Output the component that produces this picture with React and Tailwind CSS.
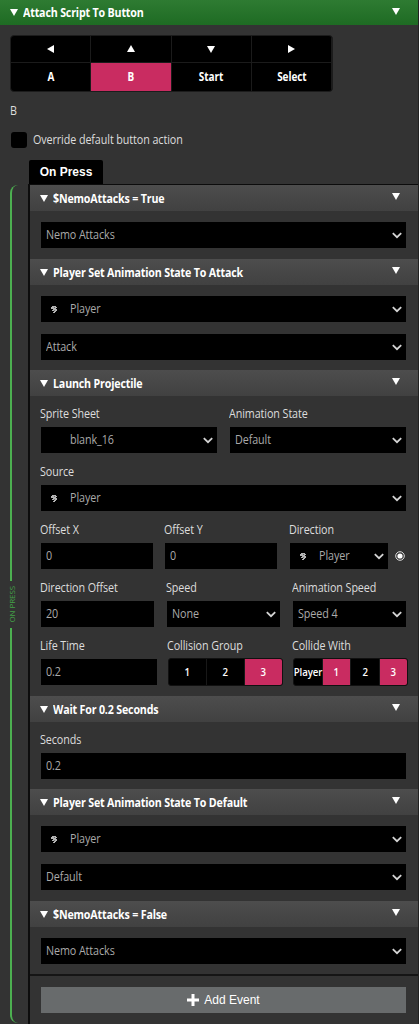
import clsx from 'clsx';

function Triangle({ className }) {
  return (
    <svg viewBox="0 0 8 7" className={clsx('w-2 h-[7px] shrink-0 fill-white', className)}>
      <path d="M0 0h8L4 7z" />
    </svg>
  );
}

function Chevron() {
  return (
    <svg viewBox="0 0 10 7" className="w-[10px] h-[7px] ml-auto mr-1 shrink-0" fill="none" stroke="#d4d4d4" strokeWidth="1.8">
      <path d="M0.8 1.2L5 5.2L9.2 1.2" />
    </svg>
  );
}

function Sprite() {
  return (
    <svg viewBox="0 0 8 8" className="w-2 h-2 ml-1 mr-3 shrink-0">
      <path d="M2 1h4v1h1v1H6v1h1v2H6v1H5v1H3V7h1V6H2V5h1V4H1V2h1z" fill="#b5b5b5" />
      <path d="M4 2h1v1H4zM4 5h1v1H4z" fill="#6a6a6a" />
    </svg>
  );
}

// slightly narrowed UI text
function Text({ className, children }) {
  return (
    <span className={clsx('inline-block origin-left scale-x-[0.86] whitespace-nowrap', className)}>
      {children}
    </span>
  );
}

function Title({ children }) {
  return (
    <span className="inline-block origin-left scale-x-[0.89] whitespace-nowrap pt-px ml-[5px] text-[12px] font-bold tracking-[-0.2px]">
      {children}
    </span>
  );
}

function Header({ title }) {
  return (
    <div className="flex items-center h-[26px] pl-[10px] pr-[18px] bg-linear-to-b from-[#4d4d4d] to-[#414141] text-white">
      <Triangle />
      <Title>{title}</Title>
      <Triangle className="ml-auto mb-[3px]" />
    </div>
  );
}

function Event({ title, className, children }) {
  return (
    <section className={className}>
      <Header title={title} />
      <div className="pt-[11px] pl-[11px] pr-3">{children}</div>
    </section>
  );
}

function Box({ children, className }) {
  return (
    <div className={clsx('flex items-center h-[26px] pl-[5px] bg-black text-[#aaa]', className)}>
      {children}
    </div>
  );
}

function Input({ value }) {
  return <Box><Text>{value}</Text></Box>;
}

function Select({ value, sprite, blank, className }) {
  return (
    <Box className={className}>
      {sprite && <Sprite />}
      <Text className={blank && 'ml-6'}>{value}</Text>
      <Chevron />
    </Box>
  );
}

function Label({ children }) {
  return (
    <div className="h-[20px] mb-[4px] -ml-[1px] pt-[2px] leading-[18px] text-[#ddd]">
      <Text>{children}</Text>
    </div>
  );
}

function Field({ label, className, children }) {
  return (
    <div className={clsx('min-w-0', className)}>
      <Label>{label}</Label>
      {children}
    </div>
  );
}

function Toggles({ options, active }) {
  return (
    <div className="flex h-7 -mt-[1px] rounded-[3px] overflow-hidden border border-[#111] bg-black text-[11.5px] font-semibold text-white">
      {options.map((o) => (
        <div
          key={o}
          className={clsx(
            'flex flex-1 basis-0 min-w-0 items-center justify-center border-l border-[#181818] first:border-l-0',
            active.includes(o) && 'bg-[#c92c61]'
          )}
        >
          <span className="inline-block scale-x-[0.84]">{o}</span>
        </div>
      ))}
    </div>
  );
}

const arrows = ['M7 0v8L0 4z', 'M0 7h8L4 0z', 'M0 1h8L4 8z', 'M1 0v8l7-4z'];
const buttons = ['A', 'B', 'Start', 'Select'];

function ButtonPicker() {
  return (
    <div className="grid grid-cols-4 grid-rows-[27px_28px] w-[323px] h-[57px] mt-[10px] ml-[10px] rounded-[4px] overflow-hidden border border-[#1c1c1c] bg-black text-white text-[11.5px] font-bold tracking-[-0.1px]">
      {arrows.map((d) => (
        <div key={d} className="flex items-center justify-center border-b border-r border-[#1b1b1b]">
          <svg viewBox="0 0 8 8" className="w-2 h-2 fill-white"><path d={d} /></svg>
        </div>
      ))}
      {buttons.map((b) => (
        <div key={b} className={clsx('flex items-center justify-center border-r border-[#1b1b1b]', b === 'B' && 'bg-[#c92c61]')}>
          <span className="inline-block scale-x-[0.87]">{b}</span>
        </div>
      ))}
    </div>
  );
}

function Rail() {
  return (
    <div className="flex flex-col w-7 shrink-0 pl-[10px] pt-[1px] pb-[1px] text-[#43a047]">
      <div className="h-[396px] w-2 border-l-2 border-[#4caf50] rounded-tl-[8px]" />
      <div className="flex items-center justify-center h-[47px] w-[3px]">
        <span className="[writing-mode:vertical-rl] rotate-180 text-[8px] tracking-[-0.1px] whitespace-nowrap">ON PRESS</span>
      </div>
      <div className="flex-1 w-2 border-l-2 border-[#4caf50] rounded-bl-[8px]" />
    </div>
  );
}

export default function App() {
  return (
    <div className="flex flex-col w-[419px] h-[1024px] overflow-hidden bg-[#333] border-r border-[#222] font-['Open_Sans',sans-serif] text-[12.5px] tracking-[-0.1px] text-[#ddd]">
      <div className="flex items-center h-[25px] shrink-0 pl-[10px] pr-[18px] bg-linear-to-b from-[#2e7b32] to-[#1e6b23] text-white">
        <Triangle />
        <Title>Attach Script To Button</Title>
        <Triangle className="ml-auto mb-[3px]" />
      </div>
      <ButtonPicker />
      <div className="h-[18px] mt-[10px] pl-[10px] leading-[18px]"><Text>B</Text></div>
      <div className="flex items-center h-4 mt-3 pl-[11px]">
        <div className="w-4 h-4 rounded-[3px] bg-black" />
        <Text className="ml-[6px]">Override default button action</Text>
      </div>
      <div className="flex items-center justify-center w-[74px] h-[24px] mt-3 ml-[29px] shrink-0 rounded-t-[2px] bg-black text-white font-['Liberation_Sans',sans-serif] text-[12px] font-bold tracking-normal">
        On Press
      </div>
      <div className="flex flex-1 min-h-0">
        <Rail />
        <div className="flex-1 min-w-0 border-l-2 border-t border-[#0c0c0c]">
          <Event title="$NemoAttacks = True" className="h-[74px]">
            <Select value="Nemo Attacks" />
          </Event>
          <Event title="Player Set Animation State To Attack" className="h-[111px]">
            <Select value="Player" sprite />
            <Select value="Attack" className="mt-3" />
          </Event>
          <Event title="Launch Projectile" className="h-[326px]">
            <div className="flex flex-col gap-2 -mt-[4px]">
              <div className="flex gap-[13px]">
                <Field label="Sprite Sheet" className="flex-1"><Select value="blank_16" blank /></Field>
                <Field label="Animation State" className="flex-1"><Select value="Default" /></Field>
              </div>
              <Field label="Source"><Select value="Player" sprite /></Field>
              <div className="flex">
                <Field label="Offset X" className="w-[112px]"><Input value="0" /></Field>
                <Field label="Offset Y" className="w-[112px] ml-3"><Input value="0" /></Field>
                <Field label="Direction" className="w-[98px] ml-[13px]"><Select value="Player" sprite /></Field>
                <div className="flex items-center justify-center h-[26px] mt-6 ml-[7px]">
                  <svg viewBox="0 0 10 10" className="w-[10px] h-[10px]">
                    <circle cx="5" cy="5" r="4.3" fill="none" stroke="#ddd" />
                    <circle cx="5" cy="5" r="2.6" fill="#fff" />
                  </svg>
                </div>
              </div>
              <div className="flex gap-[13px]">
                <Field label="Direction Offset" className="flex-1"><Input value="20" /></Field>
                <Field label="Speed" className="flex-1"><Select value="None" /></Field>
                <Field label="Animation Speed" className="flex-1"><Select value="Speed 4" /></Field>
              </div>
              <div className="flex -mr-[2px]">
                <Field label="Life Time" className="w-[116px]"><Input value="0.2" /></Field>
                <Field label="Collision Group" className="w-[115px] ml-[11px]"><Toggles options={['1', '2', '3']} active={['3']} /></Field>
                <Field label="Collide With" className="w-[115px] ml-[10px]"><Toggles options={['Player', '1', '2', '3']} active={['1', '3']} /></Field>
              </div>
            </div>
          </Event>
          <Event title="Wait For 0.2 Seconds" className="h-[93px]">
            <div className="-mt-[4px]">
              <Field label="Seconds"><Input value="0.2" /></Field>
            </div>
          </Event>
          <Event title="Player Set Animation State To Default" className="h-[112px]">
            <Select value="Player" sprite />
            <Select value="Default" className="mt-3" />
          </Event>
          <Event title="$NemoAttacks = False" className="h-[73px]">
            <Select value="Nemo Attacks" />
          </Event>
          <div className="pt-[11px] pl-[11px] pr-3 border-t-2 border-[#151515]">
            <div className="flex items-center justify-center h-[26px] bg-[#686b6c] text-white font-['Liberation_Sans',sans-serif] text-[12px] tracking-normal">
              <svg viewBox="0 0 12 12" className="w-3 h-3 mr-[5px] fill-white">
                <path d="M4.5 0h3v4.5H12v3H7.5V12h-3V7.5H0v-3h4.5z" />
              </svg>
              Add Event
            </div>
          </div>
        </div>
      </div>
    </div>
  );
}
